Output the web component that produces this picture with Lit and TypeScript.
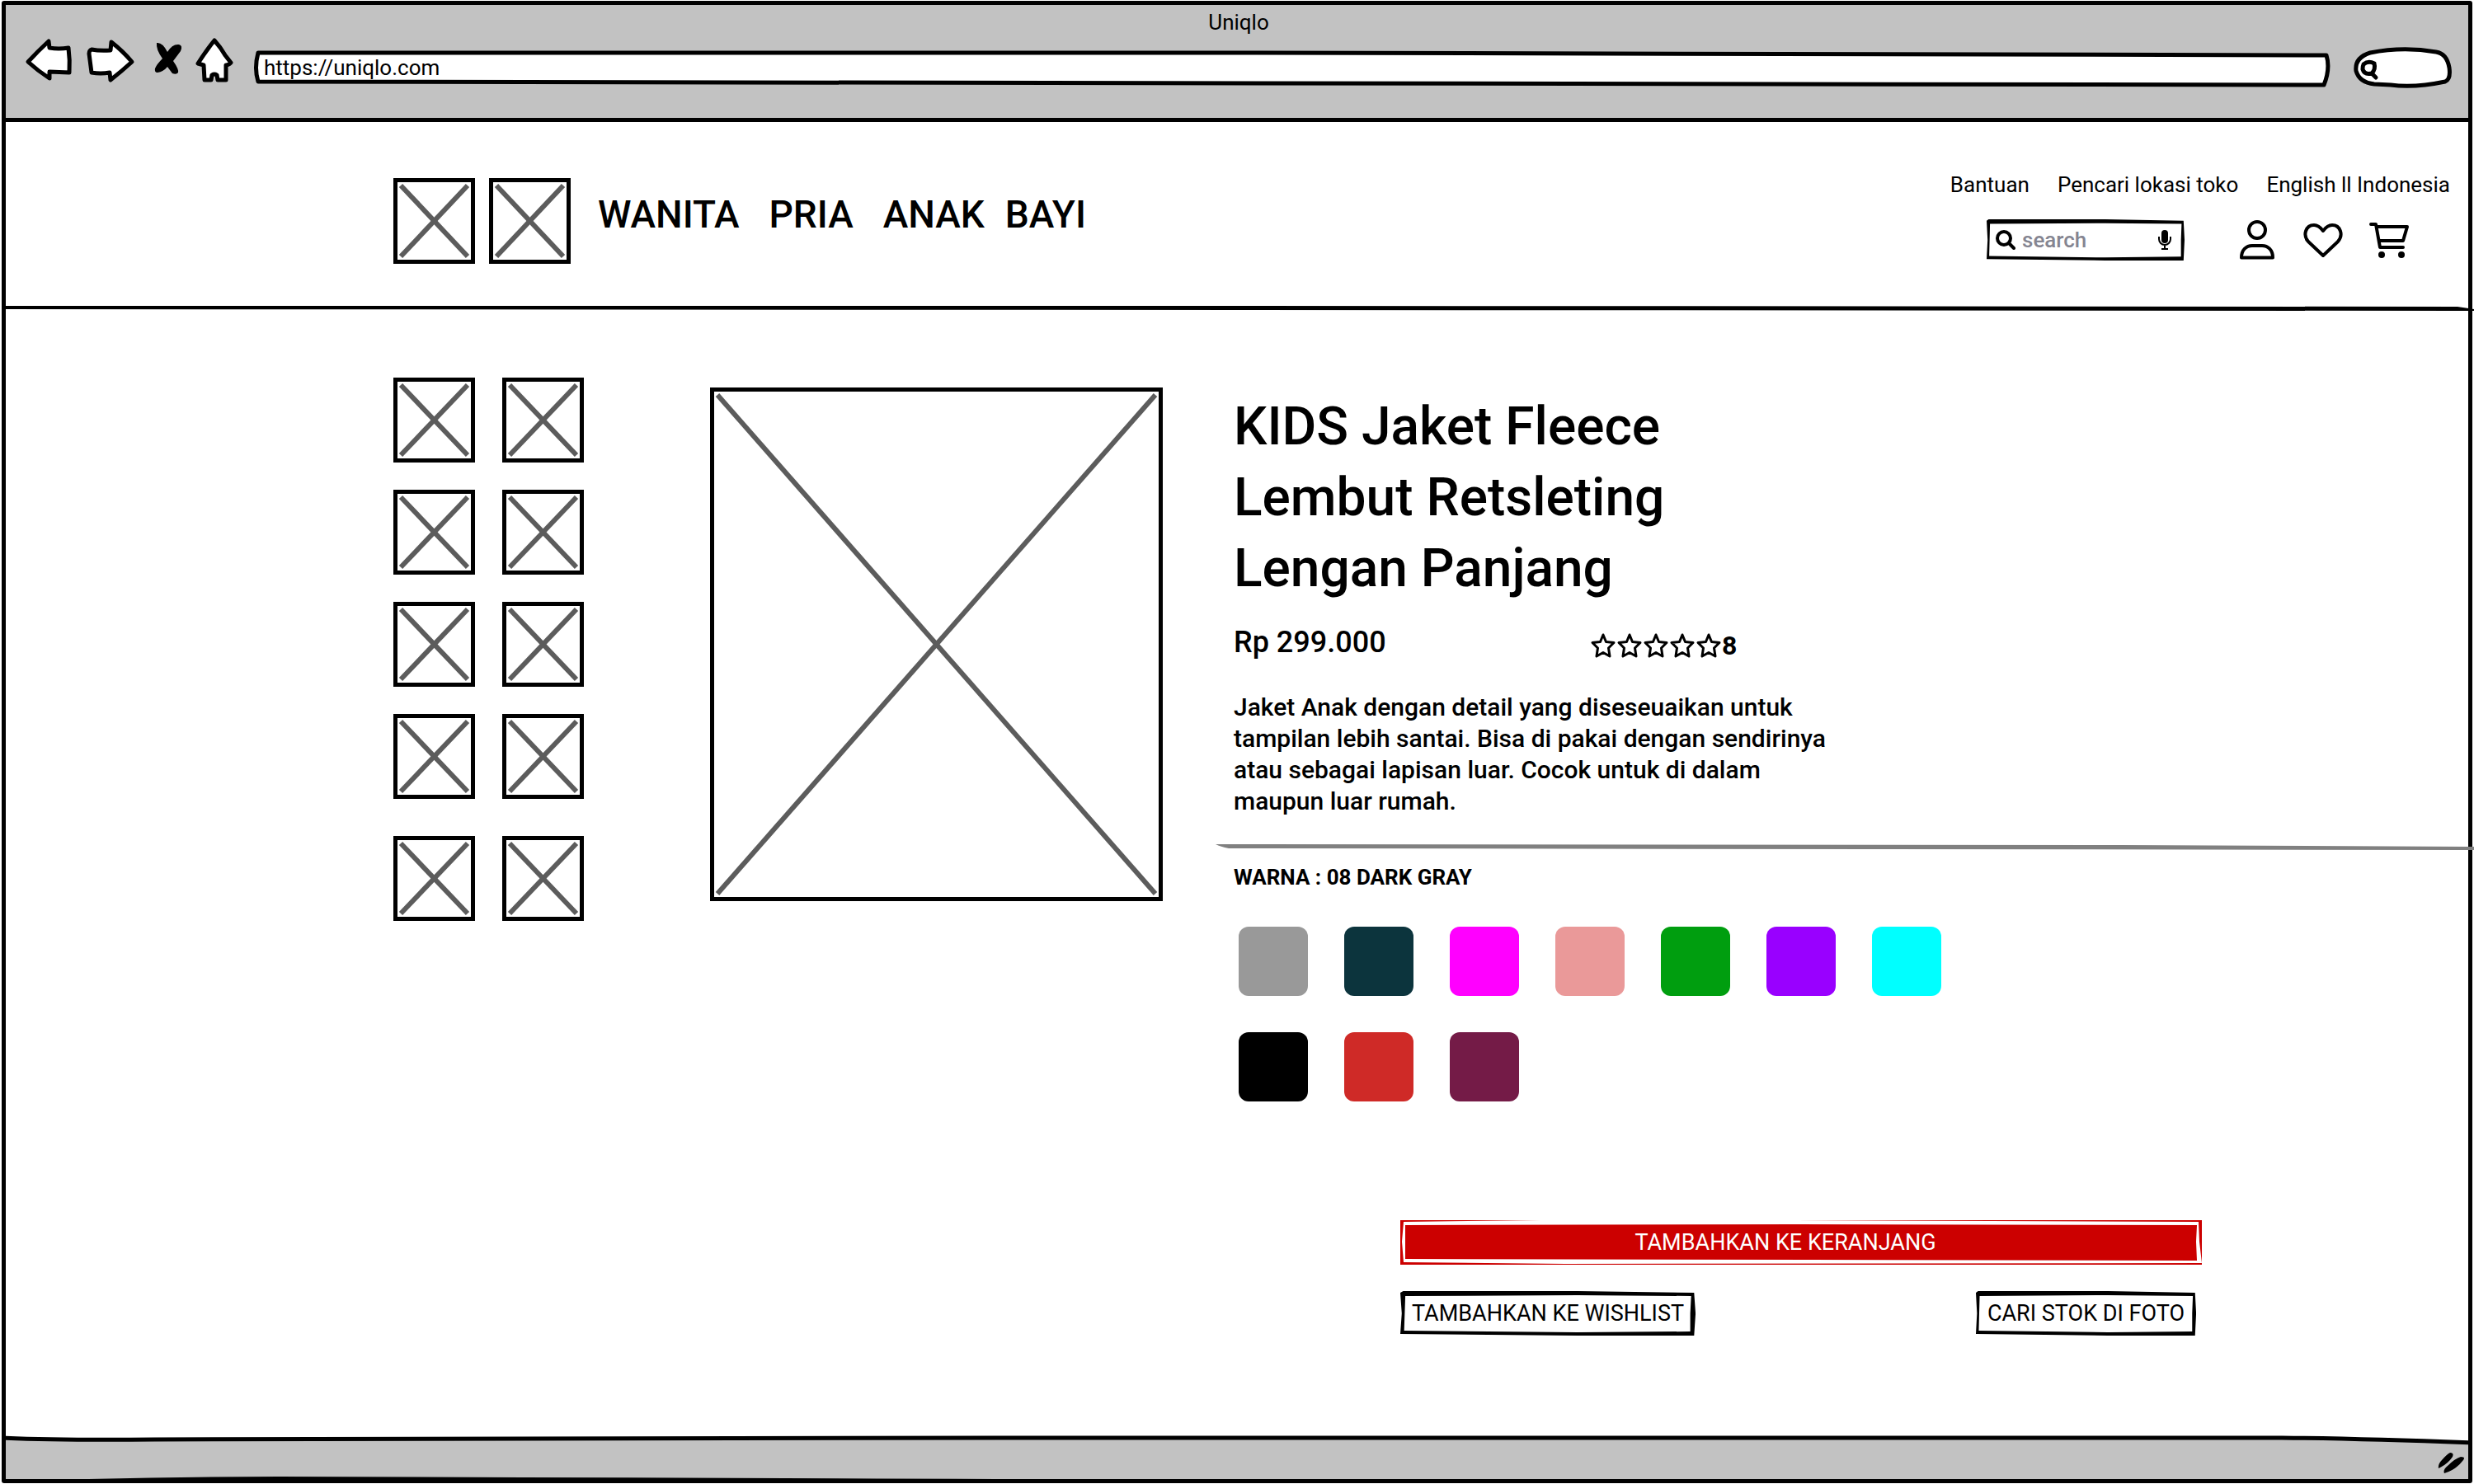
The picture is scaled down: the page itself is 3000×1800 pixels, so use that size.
import { LitElement, html, svg, css } from "lit";
import { customElement, property, state } from "lit/decorators.js";

@customElement("image-placeholder")
class ImagePlaceholder extends LitElement {
  @property() label = "";

  static styles = css`
    :host {
      display: block;
      box-sizing: border-box;
      padding: 4px;
      border: 5px solid #000;
      background: #fff;
    }
    .cross {
      display: block;
      width: 100%;
      height: 100%;
      overflow: visible;
    }
  `;

  render() {
    return html`
      <svg class="cross" role="img" aria-label=${this.label} stroke="#5c5c5c" stroke-width="6">
        <line x1="0" y1="0" x2="100%" y2="100%" />
        <line x1="100%" y1="0" x2="0" y2="100%" />
      </svg>
    `;
  }
}

const THUMBNAILS = Array.from({ length: 10 }, (_, i) => `Foto produk ${i + 1}`);

const COLORS = [
  { name: "08 DARK GRAY", value: "#999999" },
  { name: "69 NAVY", value: "#0c343d" },
  { name: "12 PINK", value: "#ff00ff" },
  { name: "11 LIGHT PINK", value: "#ea9999" },
  { name: "55 GREEN", value: "#009e0f" },
  { name: "72 PURPLE", value: "#9900ff" },
  { name: "60 CYAN", value: "#00ffff" },
  { name: "09 BLACK", value: "#000000" },
  { name: "15 RED", value: "#cf2a27" },
  { name: "19 WINE", value: "#741b47" },
];

const backIcon = html`<svg viewBox="30 43 60 64" width="60" height="64" aria-hidden="true">
  <path d="M34 75Q46 62 59 50L60 58Q71 60 83 58Q85 73 84 88L60 87L60 95Q46 86 34 75Z" fill="#fff" stroke="#000" stroke-width="5" stroke-linejoin="round" />
</svg>`;

const forwardIcon = html`<svg viewBox="104 43 60 64" width="60" height="64" aria-hidden="true">
  <path d="M111 60Q121 62 134 61L135 51Q149 62 160 75Q148 86 134 97L133 88Q122 90 111 88L108 65Q108 61 111 60Z" fill="#fff" stroke="#000" stroke-width="5" stroke-linejoin="round" />
</svg>`;

const stopIcon = html`<svg viewBox="186 43 36 64" width="36" height="64" aria-hidden="true">
  <path d="M190 52Q197 51 203 63Q209 53 217 54Q222 55 219 62L210 74Q217 84 216 88Q214 91 209 89L203 81Q198 87 191 88Q187 88 188 83Q190 78 197 71Q189 60 190 52Z" />
</svg>`;

const homeIcon = html`<svg viewBox="236 43 48 64" width="48" height="64" aria-hidden="true">
  <path d="M260 49Q268 58 273 67L280 76Q277 79 274 79L274 97L264 97L263 91Q260 89 257 91L256 97L248 97L247 79L240 77Q251 60 260 49Z" fill="#fff" stroke="#000" stroke-width="5" stroke-linejoin="round" />
</svg>`;

const userIcon = html`<svg viewBox="0 0 48 48" width="48" height="48" fill="none" stroke="#000" stroke-width="4" stroke-linejoin="round" aria-hidden="true">
  <circle cx="24" cy="12" r="10" />
  <path d="M5 45.500C5 36 11 31 18 31H30C37 31 43 36 43 45.500Z" />
</svg>`;

const heartIcon = html`<svg viewBox="0 0 48 48" width="48" height="48" fill="none" stroke="#000" stroke-width="4" stroke-linejoin="round" aria-hidden="true">
  <path d="M24 43L6 26C-1 18 3 6 13 6C18 6 21 9 24 13C27 9 30 6 35 6C45 6 49 18 42 26Z" />
</svg>`;

const cartIcon = html`<svg viewBox="0 0 48 48" width="48" height="48" fill="none" stroke="#000" stroke-width="4" stroke-linejoin="round" stroke-linecap="round" aria-hidden="true">
  <path d="M2 5H8L13 33H41M9 8H46L41 25H12" />
  <circle cx="15" cy="42" r="4" fill="#000" stroke="none" />
  <circle cx="39" cy="42" r="4" fill="#000" stroke="none" />
</svg>`;

const star = svg`<path d="M16 5L19.500 13.500L29 14.500L22.500 21L24 31L16 26.500L8 31L9.500 21L3 14.500L12.500 13.500Z" />`;

const sketchFrame = html`<svg class="frame" viewBox="0 0 100 54" preserveAspectRatio="none" aria-hidden="true">
  <path fill-rule="evenodd" d="M0 2L1 0L60 0L99.500 2L100 27L99.500 54L60 54L0 52L0.500 27ZM1.700 6L1.500 27L1.300 48L60 50L98.200 49L98.200 27L98.500 6L60 5Z" />
</svg>`;

@customElement("app-root")
class AppRoot extends LitElement {
  @state() private color = COLORS[0].name;

  static styles = css`
    :host {
      display: block;
      background: #fff;
      color: #000;
      font-family: Roboto, "Liberation Sans", sans-serif;
      font-size: 26px;
      font-weight: 500;
      line-height: 32px;
    }
    * {
      box-sizing: border-box;
    }
    svg {
      display: block;
      flex: none;
    }
    a {
      color: inherit;
      text-decoration: none;
    }
    button,
    input {
      margin: 0;
      padding: 0;
      border: 0;
      background: none;
      color: inherit;
      font: inherit;
    }
    h1,
    h2,
    p {
      margin: 0;
      font: inherit;
    }
    .window {
      display: flex;
      flex-direction: column;
      min-height: calc(100vh - 2px);
      margin: 1px 2px;
      border: 5px solid #000;
      border-radius: 3px;
    }

    /* Browser chrome */
    .chrome {
      padding: 5px 19px 36px 23px;
      border-bottom: 5px solid #000;
      background: #c2c2c2;
    }
    .chrome-title {
      text-align: center;
      font-weight: 400;
    }
    .toolbar {
      display: flex;
      align-items: flex-start;
    }
    .tools {
      display: flex;
      gap: 14px;
      margin-right: 24px;
    }
    .forward {
      margin-right: 8px;
    }
    .address {
      position: relative;
      flex: 1;
      height: 46px;
      margin-top: 18px;
    }
    .address input {
      position: relative;
      width: 100%;
      height: 42px;
      padding: 0 12px;
      font-weight: 400;
    }
    .frame {
      position: absolute;
      inset: 0;
      width: 100%;
      height: 100%;
    }
    .pill {
      position: relative;
      width: 120px;
      height: 50px;
      margin: 14px 0 0 28px;
    }
    .pill input {
      position: relative;
      width: 100%;
      height: 100%;
      padding: 0 12px 0 36px;
    }

    /* Store header */
    .store {
      display: flex;
      justify-content: space-between;
      align-items: flex-start;
      padding: 60px 22px 50px 470px;
    }
    .brand {
      display: flex;
      align-items: flex-start;
      gap: 17px;
      padding-top: 8px;
    }
    .logo {
      width: 99px;
      height: 104px;
    }
    .categories {
      display: flex;
      gap: 36px;
      margin-left: 16px;
      padding-top: 16px;
      font-size: 46px;
      line-height: 56px;
    }
    .pair {
      display: flex;
      gap: 25px;
    }
    .links {
      display: flex;
      justify-content: flex-end;
      gap: 34px;
      font-weight: 400;
    }
    .tools-row {
      display: flex;
      justify-content: flex-end;
      align-items: center;
      gap: 32px;
      margin: 26px 50px 0 0;
    }
    .search {
      position: relative;
      display: flex;
      align-items: center;
      gap: 8px;
      width: 240px;
      height: 50px;
      margin-right: 32px;
      padding: 0 15px 0 11px;
    }
    .search input {
      position: relative;
      flex: 1;
      min-width: 0;
    }
    .search input::placeholder {
      color: #858591;
      opacity: 1;
    }
    .search svg:not(.frame) {
      position: relative;
    }
    .rule {
      width: calc(100% + 14px);
      height: 8px;
      margin: 0 -7px;
    }

    /* Product */
    .product {
      display: grid;
      grid-template-columns: 384px 549px 1fr;
      align-items: start;
      padding: 80px 0 60px 470px;
    }
    .thumbs {
      display: grid;
      grid-template-columns: repeat(2, 99px);
      gap: 33px;
    }
    .thumb {
      width: 99px;
      height: 103px;
    }
    .thumb:nth-last-child(-n + 2) {
      margin-top: 12px;
    }
    .photo {
      height: 623px;
      margin-top: 12px;
    }
    .details {
      padding: 17px 0 0 86px;
    }
    .name {
      max-width: 580px;
      font-size: 64px;
      line-height: 86px;
    }
    .summary {
      display: grid;
      grid-template-columns: 432px auto;
      align-items: end;
      margin-top: 24px;
    }
    .price {
      font-size: 36px;
      line-height: 44px;
    }
    .rating {
      display: flex;
      align-items: center;
      font-size: 32px;
      font-weight: 700;
      line-height: 36px;
    }
    .description {
      max-width: 740px;
      margin-top: 38px;
      font-size: 30px;
      line-height: 38px;
    }
    .divider {
      width: calc(100% + 29px);
      height: 8px;
      margin: 32px -7px 0 -22px;
    }
    .color-name {
      margin-top: 17px;
      font-weight: 700;
    }
    .swatches {
      display: grid;
      grid-template-columns: repeat(7, 84px);
      gap: 44px;
      margin: 44px 0 0 6px;
      padding: 0;
      border: 0;
    }
    .swatch {
      appearance: none;
      width: 84px;
      height: 84px;
      border-radius: 12px;
    }
    .actions {
      display: grid;
      gap: 32px;
      max-width: 972px;
      margin: 144px 0 0 202px;
      font-size: 27px;
      font-weight: 400;
    }
    .add {
      position: relative;
      height: 54px;
      padding-right: 38px;
      color: #fff;
    }
    .secondary {
      display: flex;
      justify-content: space-between;
      padding-right: 7px;
    }
    .outline {
      position: relative;
      height: 54px;
      padding: 0 14px;
    }
    .caption {
      position: relative;
    }

    /* Status bar */
    .status {
      display: flex;
      justify-content: flex-end;
      position: relative;
      height: 56px;
      margin-top: auto;
    }
    .grip {
      position: relative;
    }
  `;

  render() {
    return html`
      <div class="window">
        <header class="chrome">
          <div class="chrome-title">Uniqlo</div>
          <div class="toolbar">
            <div class="tools">
              <button aria-label="Kembali">${backIcon}</button>
              <button class="forward" aria-label="Maju">${forwardIcon}</button>
              <button aria-label="Berhenti">${stopIcon}</button>
              <button aria-label="Beranda">${homeIcon}</button>
            </div>
            <div class="address">
              <svg class="frame" viewBox="0 0 2518 46" preserveAspectRatio="none" aria-hidden="true">
                <path d="M5 3L1200 3Q1800 5 2513 6Q2518 22 2510 42Q1300 41 5 38Q0 22 5 3Z" fill="#fff" stroke="#000" stroke-width="5" stroke-linejoin="round" />
              </svg>
              <input type="text" aria-label="Alamat" value="https://uniqlo.com" />
            </div>
            <div class="pill">
              <svg class="frame" viewBox="2855 57 120 50" aria-hidden="true">
                <path d="M2880 102Q2862 100 2858 86Q2856 70 2875 64Q2915 56 2955 63Q2968 65 2971 82Q2973 96 2966 99Q2928 107 2900 103Z" fill="#fff" stroke="#000" stroke-width="5" stroke-linejoin="round" />
                <path d="M2867 78Q2873 73 2880 77Q2882 84 2877 89Q2868 91 2866 84Q2866 80 2867 78ZM2877 89L2882 94" fill="none" stroke="#000" stroke-width="5" stroke-linecap="round" />
              </svg>
              <input type="text" aria-label="Telusuri web" />
            </div>
          </div>
        </header>

        <header class="store">
          <div class="brand">
            <image-placeholder class="logo" label="Logo"></image-placeholder>
            <image-placeholder class="logo" label="Logo"></image-placeholder>
            <nav class="categories" aria-label="Kategori">
              <a href="#wanita">WANITA</a>
              <a href="#pria">PRIA</a>
              <div class="pair"><a href="#anak">ANAK</a><a href="#bayi">BAYI</a></div>
            </nav>
          </div>
          <div>
            <nav class="links" aria-label="Layanan">
              <a href="#bantuan">Bantuan</a>
              <a href="#toko">Pencari lokasi toko</a>
              <a href="#bahasa">English ll Indonesia</a>
            </nav>
            <div class="tools-row">
              <label class="search">
                ${sketchFrame}
                <svg viewBox="0 0 24 24" width="24" height="24" fill="none" stroke="#000" stroke-width="4" aria-hidden="true">
                  <circle cx="10" cy="10" r="8" />
                  <path d="M16 16L22 22" stroke-linecap="round" />
                </svg>
                <input type="search" aria-label="Cari produk" placeholder="search" />
                <svg viewBox="0 0 18 24" width="18" height="24" aria-hidden="true">
                  <rect x="5" y="0" width="8" height="16" rx="4" />
                  <path d="M2 8V11A7 7 0 0 0 16 11V8M9 18V23M5 23H13" fill="none" stroke="#000" stroke-width="2" />
                </svg>
              </label>
              <a href="#akun" aria-label="Akun">${userIcon}</a>
              <a href="#favorit" aria-label="Favorit">${heartIcon}</a>
              <a href="#keranjang" aria-label="Keranjang">${cartIcon}</a>
            </div>
          </div>
        </header>
        <svg class="rule" viewBox="0 0 3000 8" preserveAspectRatio="none" aria-hidden="true">
          <path d="M6 1L1500 1L2980 2L3000 5L3000 7L2980 7L1500 6L6 5Z" />
        </svg>

        <main class="product">
          <div class="thumbs">
            ${THUMBNAILS.map((t) => html`<image-placeholder class="thumb" label=${t}></image-placeholder>`)}
          </div>
          <image-placeholder class="photo" label="Foto utama produk"></image-placeholder>
          <section class="details">
            <h1 class="name">KIDS Jaket Fleece Lembut Retsleting Lengan Panjang</h1>
            <div class="summary">
              <p class="price">Rp 299.000</p>
              <div class="rating">
                <svg viewBox="0 0 160 36" width="160" height="36" fill="#fff" stroke="#000" stroke-width="3" stroke-linejoin="round" role="img" aria-label="Rating">
                  ${[0, 1, 2, 3, 4].map((i) => svg`<g transform="translate(${i * 32} 0)">${star}</g>`)}
                </svg>
                <span>8</span>
              </div>
            </div>
            <p class="description">
              Jaket Anak dengan detail yang diseseuaikan untuk tampilan lebih santai. Bisa di pakai
              dengan sendirinya atau sebagai lapisan luar. Cocok untuk di dalam maupun luar rumah.
            </p>
            <svg class="divider" viewBox="0 0 1526 8" preserveAspectRatio="none" aria-hidden="true">
              <path d="M0 1L1100 2L1526 4L1526 8L800 7L16 6Q6 4 0 1Z" fill="#808080" />
            </svg>
            <h2 class="color-name">WARNA : ${this.color}</h2>
            <fieldset class="swatches" aria-label="Warna">
              ${COLORS.map(
                (c) => html`<input
                  class="swatch"
                  type="radio"
                  name="color"
                  aria-label=${c.name}
                  style="background:${c.value}"
                  .checked=${c.name === this.color}
                  @change=${() => (this.color = c.name)}
                />`
              )}
            </fieldset>
            <div class="actions">
              <button class="add">
                <svg class="frame" viewBox="0 0 972 54" preserveAspectRatio="none" aria-hidden="true">
                  <path d="M6 6L480 5L966 6L965 26L966 49L500 48L6 47Z" fill="#cc0000" />
                  <path d="M0 0L170 0L4 2L2 26L4 51L200 53L972 52L969 26L968 2L480 0L972 0L972 54L0 54Z" fill="#cc0000" />
                </svg>
                <span class="caption">TAMBAHKAN KE KERANJANG</span>
              </button>
              <div class="secondary">
                <button class="outline">${sketchFrame}<span class="caption">TAMBAHKAN KE WISHLIST</span></button>
                <button class="outline">${sketchFrame}<span class="caption">CARI STOK DI FOTO</span></button>
              </div>
            </div>
          </section>
        </main>

        <footer class="status">
          <svg class="frame" viewBox="0 0 2986 56" preserveAspectRatio="none" aria-hidden="true">
            <path d="M-5 6Q60 9 180 8Q600 6 1200 6L2760 6Q2860 7 2991 12V60H-5Z" fill="#c2c2c2" stroke="#000" stroke-width="5" />
            <path d="M100 56Q220 53 330 53Q700 54 1200 56Z" />
          </svg>
          <svg class="grip" viewBox="2950 1738 43 56" width="43" height="56" aria-hidden="true">
            <path d="M2957 1781Q2956 1776 2961 1771Q2967 1764 2971 1762Q2976 1762 2974 1767Q2968 1776 2957 1781ZM2964 1787Q2962 1783 2968 1778Q2977 1769 2984 1767Q2990 1767 2987 1771Q2978 1783 2964 1787Z" />
          </svg>
        </footer>
      </div>
    `;
  }
}
